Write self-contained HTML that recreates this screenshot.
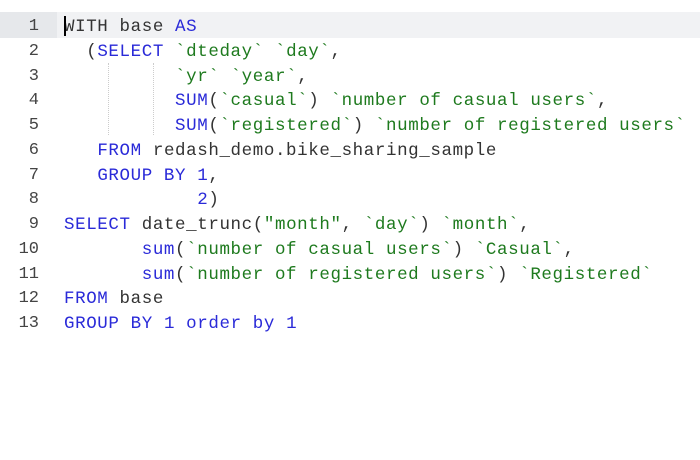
<!DOCTYPE html>
<html><head><style>
body{margin:0;width:700px;height:460px;background:#fff;overflow:hidden;position:relative;font-family:"Liberation Mono",monospace;}
.hl{position:absolute;left:0;top:12px;width:700px;height:26px;background:#f1f2f4;}
.hg{position:absolute;left:0;top:12px;width:57px;height:26px;background:#e6e8eb;}
.nums{position:absolute;left:0;top:15px;width:39px;text-align:right;font-size:17px;line-height:24.75px;color:#444;}
.code{position:absolute;left:64px;top:15px;font-size:17.5px;line-height:24.75px;letter-spacing:0.6px;color:#333;white-space:pre;margin:0;font-family:inherit;}
.k{color:#2a2ad8}.s{color:#1e7a1e}
.g{position:absolute;width:0;border-left:1px dotted #ccc;}
.cur{position:absolute;left:64px;top:16px;width:2px;height:20px;background:#000;}
</style></head><body>
<div class="hl"></div><div class="hg"></div>
<div class="g" style="left:108px;top:63px;height:72px"></div>
<div class="g" style="left:153px;top:63px;height:72px"></div>
<div class="nums">1<br>2<br>3<br>4<br>5<br>6<br>7<br>8<br>9<br>10<br>11<br>12<br>13</div>
<pre class="code">WITH base <span class="k">AS</span>
  (<span class="k">SELECT</span> <span class="s">`dteday`</span> <span class="s">`day`</span>,
          <span class="s">`yr`</span> <span class="s">`year`</span>,
          <span class="k">SUM</span>(<span class="s">`casual`</span>) <span class="s">`number of casual users`</span>,
          <span class="k">SUM</span>(<span class="s">`registered`</span>) <span class="s">`number of registered users`</span>
   <span class="k">FROM</span> redash_demo.bike_sharing_sample
   <span class="k">GROUP BY</span> <span class="k">1</span>,
            <span class="k">2</span>)
<span class="k">SELECT</span> date_trunc(<span class="s">"month"</span>, <span class="s">`day`</span>) <span class="s">`month`</span>,
       <span class="k">sum</span>(<span class="s">`number of casual users`</span>) <span class="s">`Casual`</span>,
       <span class="k">sum</span>(<span class="s">`number of registered users`</span>) <span class="s">`Registered`</span>
<span class="k">FROM</span> base
<span class="k">GROUP BY</span> <span class="k">1</span> <span class="k">order by</span> <span class="k">1</span></pre>
<div class="cur"></div>
</body></html>
